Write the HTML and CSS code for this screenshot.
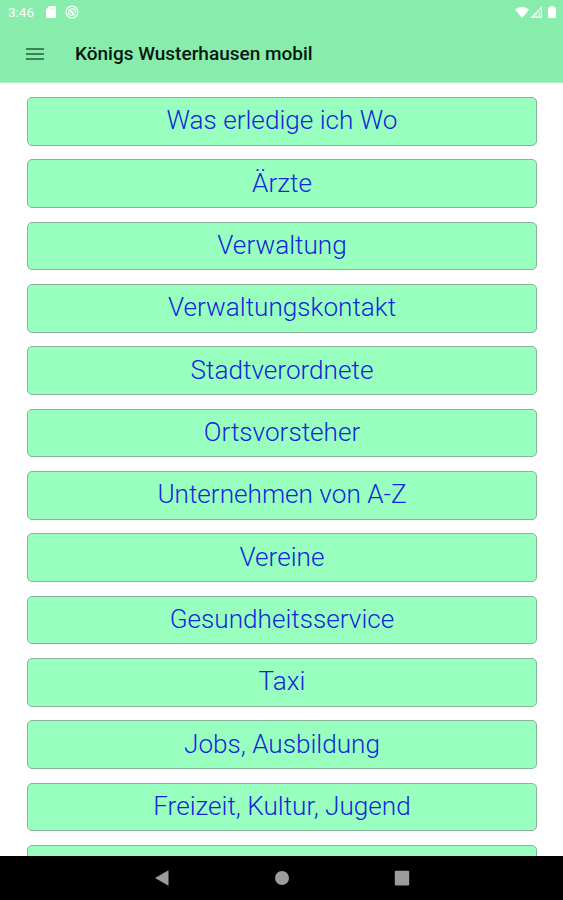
FILE: index.html
```
<!DOCTYPE html>
<html lang="de">
<head>
<meta charset="utf-8">
<title>Königs Wusterhausen mobil</title>
<link rel="stylesheet" href="styles.css">
</head>
<body>
<div class="screen">
  <header class="header">
    <div class="status">
      <span class="time">3:46</span>
      <svg class="sd" viewBox="0 0 10 12"><path d="M3.5 0H9a1 1 0 0 1 1 1v10a1 1 0 0 1-1 1H1a1 1 0 0 1-1-1V3.5z" fill="#fff"/><path d="M3.6 2v2M5.6 2v2M7.6 2v2" stroke="#b9f4d0" stroke-width=".8"/></svg>
      <svg class="sync" viewBox="0 0 14 14" fill="none" stroke="#fff"><circle cx="7" cy="7" r="5.900" stroke-width="1.300"/><path d="M3.8 4.200 10 10.200M5.400 3.800h3.200a2 2 0 0 1 1.800 2v2M3.700 6v2.200a2 2 0 0 0 2 2h2.500" stroke-width="1.300"/><path d="m6 6 2.200 2.200" stroke-width="2"/></svg>
      <svg class="wifi" viewBox="0 0 14 11"><path d="M0 2.400Q7-2.400 14 2.400L7 11z" fill="#fff"/></svg>
      <svg class="signal" viewBox="0 0 12 12"><path d="M1.600 11.300 11.300 1.600v9.700z" fill="none" stroke="#fff" stroke-width="1.100"/><path d="M1 11.600 7 5.600v6z" fill="#fff" opacity=".5"/><path d="M9 6v6" stroke="#fff"/></svg>
      <svg class="battery" viewBox="0 0 8 12"><path d="M2.500 0h3v1.300H7a1 1 0 0 1 1 1V11a1 1 0 0 1-1 1H1a1 1 0 0 1-1-1V2.300a1 1 0 0 1 1-1h1.500z" fill="#fff"/></svg>
    </div>
    <div class="toolbar">
      <svg class="menu" viewBox="0 0 18 12"><path d="M0 1h18M0 6h18M0 11h18" stroke="#255d3b" stroke-width="1.500"/></svg>
      <h1 class="title">Königs Wusterhausen mobil</h1>
    </div>
  </header>
  <main class="list">
    <button class="item">Was erledige ich Wo</button>
    <button class="item">Ärzte</button>
    <button class="item">Verwaltung</button>
    <button class="item">Verwaltungskontakt</button>
    <button class="item">Stadtverordnete</button>
    <button class="item">Ortsvorsteher</button>
    <button class="item">Unternehmen von A-Z</button>
    <button class="item">Vereine</button>
    <button class="item">Gesundheitsservice</button>
    <button class="item">Taxi</button>
    <button class="item">Jobs, Ausbildung</button>
    <button class="item">Freizeit, Kultur, Jugend</button>
    <button class="item"></button>
  </main>
  <nav class="navbar">
    <svg viewBox="0 0 16 16"><path d="M1 8 14.500.3v15.400z" fill="#9c9c9c"/></svg>
    <svg viewBox="0 0 16 16"><circle cx="8" cy="8" r="7" fill="#9c9c9c"/></svg>
    <svg viewBox="0 0 16 16"><rect x=".8" y=".8" width="14.400" height="14.800" rx="1" fill="#9c9c9c"/></svg>
  </nav>
</div>
</body>
</html>
```
FILE: styles.css
```
* { box-sizing: border-box; }
body { margin: 0; font-family: Roboto, sans-serif; }
.screen {
  display: flex;
  flex-direction: column;
  height: 900px;
  overflow: hidden;
  background: #fff;
}
.header {
  flex: none;
  height: 83px;
  background: #88ecad;
  border-bottom: 1px solid #a3f0c0;
}
.status {
  display: flex;
  align-items: center;
  height: 24px;
  padding: 0 7px 0 8px;
  color: #fff;
}
.time { width: 38px; font-size: 13.5px; line-height: 24px; }
.sd { width: 10px; height: 12px; }
.sync { width: 14px; height: 14px; margin-left: 9px; }
.wifi { width: 14px; height: 11px; margin-left: auto; }
.signal { width: 12px; height: 12px; margin-left: 1px; }
.battery { width: 8px; height: 12px; margin-left: 6px; }
.toolbar {
  display: flex;
  align-items: center;
  height: 58px;
  padding: 0 26px;
}
.menu { width: 18px; height: 12px; margin-top: 1px; }
.title {
  margin: 1px 0 0 31px;
  font-size: 19px;
  font-weight: 500;
  line-height: 24px;
  color: #06190d;
}
.list {
  flex: 1;
  min-height: 0;
  display: flex;
  flex-direction: column;
  gap: 13.65px;
  padding: 13.9px 26px 0 27px;
  overflow: hidden;
}
.item {
  flex: none;
  height: 48.7px;
  padding: 0 0 2px;
  border: 1px solid #87b498;
  border-radius: 5px;
  background: #99ffbe;
  color: #1228dd;
  font: 300 26.15px/30px Roboto, sans-serif;
}
.navbar {
  flex: none;
  display: flex;
  justify-content: center;
  align-items: center;
  gap: 104px;
  height: 44px;
  background: #000;
}
.navbar svg { width: 16px; height: 16px; }
```
